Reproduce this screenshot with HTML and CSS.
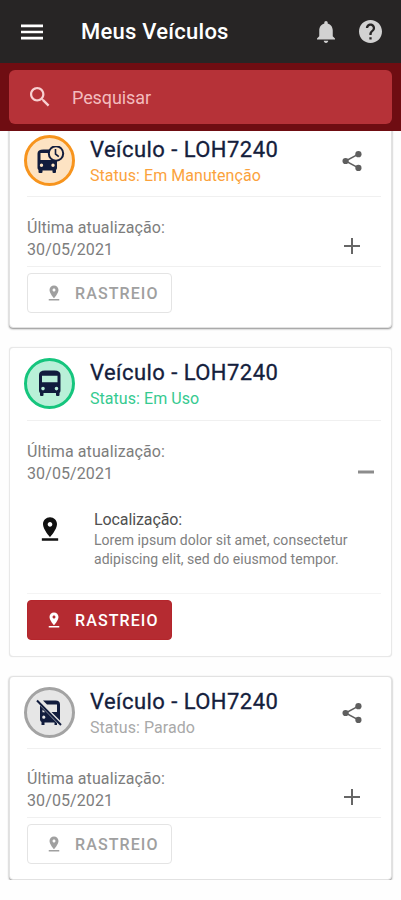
FILE: index.html
```
<!DOCTYPE html>
<html lang="pt-BR">
  <head>
    <meta charset="UTF-8" />
    <meta name="viewport" content="width=device-width, initial-scale=1.0" />
    <title>Meus Veículos</title>
    <link rel="stylesheet" href="styles.css">
  </head>
  <body>
    <!-- Shared icons -->
    <svg class="icon-defs" width="0" height="0">
      <symbol id="icon-share" viewBox="0 0 24 24">
        <path d="M19 4.5L5 12l14 7.5" fill="none" stroke="currentColor" stroke-width="1.7" />
        <circle cx="19" cy="4.5" r="3.4" />
        <circle cx="5" cy="12" r="3.4" />
        <circle cx="19" cy="19.5" r="3.4" />
      </symbol>
      <symbol id="icon-pin" viewBox="0 0 24 24">
        <path d="M18 8c0-3.31-2.69-6-6-6S6 4.69 6 8c0 4.500 6 11 6 11s6-6.500 6-11zm-8 0c0-1.100.9-2 2-2s2 .9 2 2-.89 2-2 2c-1.100 0-2-.9-2-2zM5 20v2h14v-2H5z" />
      </symbol>
    </svg>

    <header class="header">
      <div class="topbar">
        <svg class="menu-icon" viewBox="0 0 22 16">
          <path d="M0 0.500h22v2.700H0zM0 6.650h22v2.700H0zM0 12.800h22v2.700H0z" />
        </svg>
        <h1>Meus Veículos</h1>
        <svg class="bell-icon" viewBox="4 2.500 16 19.500">
          <path d="M12 22c1.100 0 2-.9 2-2h-4c0 1.100.89 2 2 2zm6-6v-5c0-3.070-1.640-5.640-4.500-6.320V4c0-.83-.67-1.500-1.500-1.500s-1.500.67-1.500 1.500v.68C7.630 5.360 6 7.920 6 11v5l-2 2v1h16v-1l-2-2z" />
        </svg>
        <svg class="help-icon" viewBox="2 2 20 20">
          <path d="M12 2C6.480 2 2 6.480 2 12s4.480 10 10 10 10-4.480 10-10S17.520 2 12 2zm1 17h-2v-2h2v2zm2.070-7.750l-.9.920C13.450 12.900 13 13.500 13 15h-2v-.5c0-1.100.45-2.100 1.170-2.830l1.240-1.260c.37-.36.59-.86.59-1.410 0-1.100-.9-2-2-2s-2 .9-2 2H8c0-2.210 1.790-4 4-4s4 1.790 4 4c0 .88-.36 1.680-.93 2.250z" />
        </svg>
      </div>
      <div class="search-area">
        <div class="search-box">
          <svg viewBox="3 3 18 18">
            <path d="M15.500 14h-.79l-.28-.27C15.410 12.590 16 11.110 16 9.500 16 5.910 13.090 3 9.500 3S3 5.910 3 9.500 5.910 16 9.500 16c1.610 0 3.090-.59 4.230-1.570l.27.28v.79l5 4.990L20.490 19l-4.990-5zm-6 0C7.010 14 5 11.990 5 9.500S7.010 5 9.500 5 14 7.010 14 9.500 11.990 14 9.500 14z" />
          </svg>
          <span>Pesquisar</span>
        </div>
      </div>
    </header>

    <main class="vehicles">
      <section class="card maintenance">
        <div class="card-head">
          <div class="avatar">
            <svg viewBox="0 0 30 30">
              <path fill-rule="evenodd" d="M2.500 7.500q0-4 6-4h9.500l4 11v7.500q0 1-1 2v2q0 1-1 1h-1.500q-1 0-1-1v-1.500h-10V26q0 1-1 1H4.500q-1 0-1-1v-2q-1-1-1-2zM5.500 7v7h14V7zM6.500 17.500a1.700 1.700 0 1 0 0 3.400 1.700 1.700 0 0 0 0-3.400zM18 17.500a1.700 1.700 0 1 0 0 3.400 1.700 1.700 0 0 0 0-3.400z" />
              <circle class="clock-face" cx="21" cy="7.500" r="7.200" />
              <path class="clock-hands" d="M20.500 3V8l3.300 2.600" />
            </svg>
          </div>
          <div class="card-title">
            <h2>Veículo - LOH7240</h2>
            <p class="status">Status: Em Manutenção</p>
          </div>
          <svg class="share-icon"><use href="#icon-share" /></svg>
        </div>
        <div class="card-update">
          <p>Última atualização:<br />30/05/2021</p>
          <svg class="toggle-icon" viewBox="0 0 16 16"><path d="M0 8h16M8 0v16" /></svg>
        </div>
        <button class="track-button" disabled>
          <svg><use href="#icon-pin" /></svg>RASTREIO
        </button>
      </section>

      <section class="card in-use">
        <div class="card-head">
          <div class="avatar">
            <svg viewBox="0 0 30 30">
              <path fill-rule="evenodd" d="M4 6q0-4.500 6-4.500h9.500q6 0 6 4.500v15.500q0 1.500-1 2.500v2q0 1-1 1h-1.500q-1 0-1-1v-2h-12.500v2q0 1-1 1H6q-1 0-1-1v-2q-1-1-1-2.500zM7 6.800v6.400h15.500V6.800zM8 17.800a1.800 1.800 0 1 0 0 3.600 1.800 1.800 0 0 0 0-3.600zM21.500 17.800a1.800 1.800 0 1 0 0 3.600 1.800 1.800 0 0 0 0-3.600z" />
            </svg>
          </div>
          <div class="card-title">
            <h2>Veículo - LOH7240</h2>
            <p class="status">Status: Em Uso</p>
          </div>
        </div>
        <div class="card-update">
          <p>Última atualização:<br />30/05/2021</p>
          <svg class="toggle-icon" viewBox="0 0 16 16"><path d="M0 8h16" /></svg>
        </div>
        <div class="location">
          <svg><use href="#icon-pin" /></svg>
          <div>
            <h3>Localização:</h3>
            <p>Lorem ipsum dolor sit amet, consectetur<br />adipiscing elit, sed do eiusmod tempor.</p>
          </div>
        </div>
        <button class="track-button">
          <svg><use href="#icon-pin" /></svg>RASTREIO
        </button>
      </section>

      <section class="card stopped">
        <div class="card-head">
          <div class="avatar">
            <svg viewBox="0 0 30 30">
              <path d="M8 2.500h12.500q4.500 0 4.500 4v16L16.500 14H22V6.500H12z" />
              <path fill-rule="evenodd" d="M5 7.500L22 25v2h-2.500v-2.500H9.500V27H6.500v-3q-1.500-1-1.500-2.500zM7.500 11.500v2.700h2.700zM8.800 17.600a1.600 1.600 0 1 0 0 3.200 1.600 1.600 0 0 0 0-3.200z" />
              <path class="slash" d="M2 2.500l24 24.500" />
            </svg>
          </div>
          <div class="card-title">
            <h2>Veículo - LOH7240</h2>
            <p class="status">Status: Parado</p>
          </div>
          <svg class="share-icon"><use href="#icon-share" /></svg>
        </div>
        <div class="card-update">
          <p>Última atualização:<br />30/05/2021</p>
          <svg class="toggle-icon" viewBox="0 0 16 16"><path d="M0 8h16M8 0v16" /></svg>
        </div>
        <button class="track-button" disabled>
          <svg><use href="#icon-pin" /></svg>RASTREIO
        </button>
      </section>
    </main>
  </body>
</html>
```

FILE: styles.css
```
* {
  box-sizing: border-box;
}
body {
  font-family: Roboto, sans-serif;
  background-color: #fefefe;
  margin: 0;
}
h1,
h2,
h3,
p {
  margin: 0;
}
svg {
  display: block;
  flex-shrink: 0;
  fill: currentColor;
}
.icon-defs {
  height: 0;
}

/* Header */
.header {
  position: relative;
  z-index: 1;
}
.topbar {
  display: flex;
  align-items: center;
  height: 63px;
  padding: 0 19px 0 21px;
  background: #272525;
  color: #fff;
}
.topbar h1 {
  flex: 1;
  margin-left: 38px;
  font-size: 22px;
  font-weight: 500;
  letter-spacing: 0.25px;
}
.menu-icon {
  width: 22px;
  height: 16px;
}
.bell-icon {
  width: 18px;
  height: 22px;
  margin-right: 24px;
  color: #d2d2d2;
}
.help-icon {
  width: 23px;
  height: 23px;
  color: #d2d2d2;
}
.search-area {
  height: 68px;
  padding: 7px 9px;
  background: #6f0d12;
}
.search-box {
  display: flex;
  align-items: center;
  height: 54px;
  padding-left: 21px;
  border-radius: 6px;
  background: #b63238;
  color: #f3bcbe;
  font-size: 18px;
  letter-spacing: -0.1px;
}
.search-box svg {
  width: 20px;
  height: 20px;
  margin-right: 22px;
  color: #f8d0d1;
}

/* Vehicle cards */
.vehicles {
  display: flex;
  flex-direction: column;
  gap: 19px;
  margin-top: -7px;
  padding: 0 9px;
}
.card {
  height: 204px;
  padding: 0 10px 0 17px;
  border: 1px solid #e2e2e2;
  border-radius: 4px;
  background: #fff;
  box-shadow: 0 1px 2px rgba(0, 0, 0, 0.45);
}
.card-head {
  display: flex;
  align-items: flex-start;
  height: 72px;
  padding-top: 10px;
  border-bottom: 1px solid #f0f0f0;
}
.avatar {
  display: flex;
  align-items: center;
  justify-content: center;
  width: 51px;
  height: 51px;
  margin-left: -3px;
  border: 3px solid;
  border-radius: 50%;
}
.avatar svg {
  width: 30px;
  height: 30px;
  color: #111c3d;
}
.card-title {
  flex: 1;
  margin-left: 15px;
  padding-top: 1px;
}
.card-title h2 {
  color: #14203c;
  font-size: 22px;
  font-weight: 400;
  letter-spacing: 0.45px;
  line-height: 28px;
  -webkit-text-stroke: 0.3px #14203c;
}
.status {
  font-size: 16px;
  letter-spacing: 0.05px;
  line-height: 24px;
}
.share-icon {
  width: 22px;
  height: 24px;
  margin: 14px 18px 0 0;
  color: #5f5f5f;
}
.card-update {
  display: flex;
  align-items: flex-end;
  justify-content: space-between;
  height: 70px;
  padding: 0 21px 5px 0;
  border-bottom: 1px solid #f0f0f0;
}
.card-update p {
  color: #7d7d7d;
  font-size: 16px;
  line-height: 22px;
  letter-spacing: 0.1px;
}
.toggle-icon {
  width: 16px;
  height: 16px;
  margin-bottom: 7px;
  fill: none;
  stroke: #666;
  stroke-width: 2;
}
.track-button {
  display: flex;
  align-items: center;
  width: 145px;
  height: 40px;
  margin-top: 6px;
  padding: 0 0 0 16px;
  border: 1px solid #e4e4e4;
  border-radius: 4px;
  background: #fff;
  color: #a0a0a0;
  font-family: inherit;
  font-size: 16px;
  font-weight: 500;
  letter-spacing: 1.1px;
}
.track-button svg {
  width: 20px;
  height: 18px;
  margin-right: 11px;
}

/* Status variants */
.maintenance .avatar {
  border-color: #f7941d;
  background: #fde3c3;
}
.maintenance .status {
  color: #fba23c;
}
.clock-face {
  fill: #fde3c3;
  stroke: currentColor;
  stroke-width: 2;
}
.clock-hands {
  fill: none;
  stroke: currentColor;
  stroke-width: 1.6;
}
.in-use {
  height: 310px;
  border-color: #e8e8e8;
  box-shadow: 0 0 1px rgba(0, 0, 0, 0.15);
}
.in-use .card-head {
  height: 73px;
}
.in-use .avatar {
  border-color: #15c57d;
  background: #b9f0d8;
}
.in-use .status {
  color: #36ca90;
}
.in-use .card-update {
  height: 69px;
  padding-right: 7px;
  border-bottom: none;
}
.in-use .toggle-icon {
  margin-bottom: 5px;
  stroke: #8c8c8c;
  stroke-width: 3;
}
.in-use .track-button {
  border-color: #b4262c;
  background: #b52b31;
  color: #fff;
}
.location {
  display: flex;
  height: 104px;
  padding: 19px 0 0 9px;
  border-bottom: 1px solid #f4f4f4;
}
.location svg {
  width: 28px;
  height: 28px;
  margin: 6px 30px 0 0;
  color: #111;
}
.location h3 {
  color: #505050;
  font-size: 16px;
  font-weight: 400;
  letter-spacing: -0.1px;
  line-height: 22px;
}
.location p {
  color: #808080;
  font-size: 14px;
  letter-spacing: 0.05px;
  line-height: 19px;
}
.stopped .card-update {
  height: 69px;
}
.stopped .avatar {
  border-color: #a3a3a3;
  background: #e6e6e6;
}
.stopped .status {
  color: #a9a9a9;
}
.slash {
  fill: none;
  stroke: currentColor;
  stroke-width: 2;
}
```
